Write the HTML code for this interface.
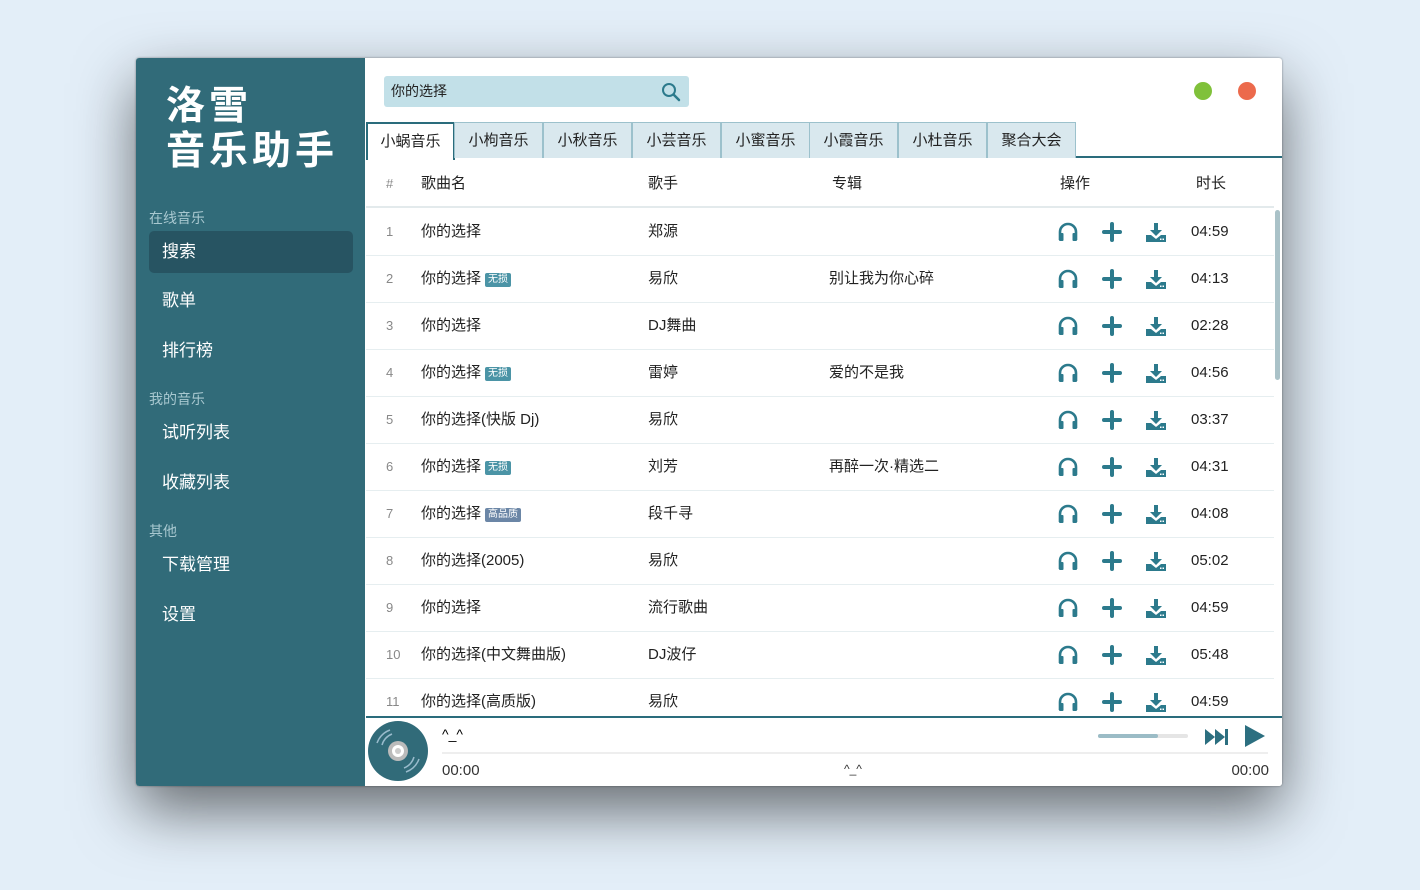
<!DOCTYPE html>
<html><head><meta charset="utf-8"><style>
*{box-sizing:border-box;margin:0;padding:0}
body{width:1420px;height:890px;background:#e3eef8;font-family:"Liberation Sans","Noto Sans CJK SC",sans-serif;position:relative;overflow:hidden}
.win{position:absolute;left:136px;top:58px;width:1146px;height:728px;background:#fff;box-shadow:0 25px 60px rgba(0,0,0,.55),0 0 2px rgba(0,0,0,.4);border-radius:3px;overflow:hidden}
.side{position:absolute;left:0;top:0;width:229px;height:728px;background:#316b79;color:#fff}
.logo{position:absolute;left:30px;top:26px;font-size:39px;line-height:45px;letter-spacing:4px;font-weight:bold}
.sec{position:absolute;left:13px;font-size:14px;color:#a8c8d0}
.item{position:absolute;left:13px;width:204px;height:42px;line-height:42px;padding-left:13px;font-size:17px;border-radius:5px}
.item.act{background:#275462}
.search{position:absolute;left:248px;top:18px;width:305px;height:31px;background:#c2e0e8;border-radius:3px;font-size:14px;line-height:31px;padding-left:7px;color:#222}
.dot{position:absolute;top:24px;width:18px;height:18px;border-radius:50%}
.tabs{position:absolute;left:230px;top:64px;height:36px;width:916px;border-bottom:2px solid #2a6c7c}
.tab{position:absolute;top:0;width:89px;height:36px;background:#d9e8ee;border:1px solid #9cc1cc;border-bottom:none;text-align:center;line-height:36px;font-size:15px;color:#222}
.tab.act{background:#fff;border:2px solid #2a6c7c;border-bottom:none;height:38px}
.row{position:absolute;left:230px;width:908px;height:47px;border-bottom:1px solid #e6eef0;font-size:15px;color:#222}
.row span{position:absolute;top:0;line-height:46px}
.n{left:20px;color:#888;font-size:13px}
.tag{display:inline-block;font-size:10px;color:#fff;background:#4b94a6;padding:0 3px;line-height:14px;border-radius:2px;margin-left:4px;vertical-align:1px}
.tag.hq{background:#6b86a6}
.ic{position:absolute;top:13px}
.player{position:absolute;left:230px;top:658px;width:916px;height:70px;border-top:2px solid #2a6c7c;background:#fff}
</style></head><body>
<div class="win">
<div class="side">
<div class="logo">洛雪<br>音乐助手</div>
<div class="sec" style="top:150px">在线音乐</div>
<div class="item act" style="top:173px">搜索</div>
<div class="item" style="top:222px">歌单</div>
<div class="item" style="top:272px">排行榜</div>
<div class="sec" style="top:331px">我的音乐</div>
<div class="item" style="top:354px">试听列表</div>
<div class="item" style="top:404px">收藏列表</div>
<div class="sec" style="top:463px">其他</div>
<div class="item" style="top:486px">下载管理</div>
<div class="item" style="top:536px">设置</div>
</div>
<div class="search">你的选择
<svg style="position:absolute;right:8px;top:6px" width="20" height="20" viewBox="0 0 20 20"><circle cx="8" cy="8" r="6" fill="none" stroke="#2c7a8c" stroke-width="2"/><path d="M12.5 12.5L18 18" stroke="#2c7a8c" stroke-width="2.5" stroke-linecap="round"/></svg></div>
<div class="dot" style="left:1058px;background:#80c13a"></div>
<div class="dot" style="left:1102px;background:#ec6a4c"></div>
<div class="tabs">
<div class="tab act" style="left:0">小蜗音乐</div>
<div class="tab" style="left:88px">小枸音乐</div>
<div class="tab" style="left:177px">小秋音乐</div>
<div class="tab" style="left:266px">小芸音乐</div>
<div class="tab" style="left:355px">小蜜音乐</div>
<div class="tab" style="left:443px">小霞音乐</div>
<div class="tab" style="left:532px">小杜音乐</div>
<div class="tab" style="left:621px">聚合大会</div>
</div>
<div class="row" style="top:102px;height:48px;border-bottom:2px solid #e3eaec">
<span class="n" style="line-height:48px">#</span><span style="left:55px;line-height:48px">歌曲名</span><span style="left:282px;line-height:48px">歌手</span><span style="left:466px;line-height:48px">专辑</span><span style="left:694px;line-height:48px">操作</span><span style="left:830px;line-height:48px">时长</span>
</div>
<div style="position:absolute;left:1139px;top:152px;width:5px;height:170px;background:#aac2c8;border-radius:3px"></div>
<div id="rows"></div>
<div class="player">
<svg style="position:absolute;left:2px;top:3px" width="60" height="60" viewBox="0 0 60 60"><circle cx="30" cy="30" r="30" fill="#316b79"/><circle cx="30" cy="30" r="10" fill="#bbb"/><circle cx="30" cy="30" r="6" fill="#fff"/><circle cx="30" cy="30" r="3" fill="#ccc"/><path d="M14 24a17 17 0 0 1 10-11M9 22a22 22 0 0 1 13-13M46 36a17 17 0 0 1-10 11M51 38a22 22 0 0 1-13 13" stroke="#9bc" stroke-width="1.5" fill="none"/></svg>
<div style="position:absolute;left:76px;top:8px;font-size:14px">^_^</div>
<div style="position:absolute;left:732px;top:16px;width:90px;height:4px;background:#e5e5e5;border-radius:2px"><div style="width:60px;height:4px;background:#9bbcc6;border-radius:2px"></div></div>
<svg style="position:absolute;left:838px;top:9px" width="26" height="20" viewBox="0 0 26 20"><path d="M1 2l10 8-10 8zM11 2l10 8-10 8z" fill="#2c6f80"/><rect x="21" y="2" width="3" height="16" fill="#2c6f80"/></svg>
<svg style="position:absolute;left:878px;top:6px" width="22" height="24" viewBox="0 0 22 24"><path d="M1 1l20 11-20 11z" fill="#2c6f80"/></svg>
<div style="position:absolute;left:76px;top:34px;width:826px;height:2px;background:#eee"></div>
<div style="position:absolute;left:76px;top:44px;font-size:15px;color:#333">00:00</div>
<div style="position:absolute;left:478px;top:44px;font-size:12px;color:#333">^_^</div>
<div style="position:absolute;right:13px;top:44px;font-size:15px;color:#333">00:00</div>
</div>
</div>
<script>
var d=[["你的选择","","郑源","","04:59"],["你的选择","无损","易欣","别让我为你心碎","04:13"],["你的选择","","DJ舞曲","","02:28"],["你的选择","无损","雷婷","爱的不是我","04:56"],["你的选择(快版 Dj)","","易欣","","03:37"],["你的选择","无损","刘芳","再醉一次·精选二","04:31"],["你的选择","高品质","段千寻","","04:08"],["你的选择(2005)","","易欣","","05:02"],["你的选择","","流行歌曲","","04:59"],["你的选择(中文舞曲版)","","DJ波仔","","05:48"],["你的选择(高质版)","","易欣","","04:59"]];
var c="#2c7a8c",h="";
var hp='<svg class="ic" style="left:691px;top:12px" width="22" height="22" viewBox="0 0 22 22"><path d="M3 19v-8a8 8 0 0 1 16 0v8" fill="none" stroke="'+c+'" stroke-width="2.6"/><rect x="2" y="12" width="4.5" height="8" rx="1" fill="'+c+'"/><rect x="15.5" y="12" width="4.5" height="8" rx="1" fill="'+c+'"/></svg>';
var pl='<svg class="ic" style="left:736px" width="20" height="20" viewBox="0 0 20 20"><path d="M10 2v16M2 10h16" stroke="'+c+'" stroke-width="4" stroke-linecap="round"/></svg>';
var dl='<svg class="ic" style="left:780px" width="20" height="20" viewBox="0 0 20 20"><path d="M8 1h4v7h4l-6 6-6-6h4z" fill="'+c+'"/><path d="M0 13h5l5 4 5-4h5v7H0z" fill="'+c+'"/><rect x="14" y="16.5" width="1.5" height="1.5" fill="#fff"/><rect x="16.5" y="16.5" width="1.5" height="1.5" fill="#fff"/></svg>';
d.forEach(function(r,i){var t=r[1]?'<i class="tag'+(r[1]=="高品质"?" hq":"")+'" style="font-style:normal">'+r[1]+'</i>':'';
h+='<div class="row" style="top:'+(151+47*i)+'px"><span class="n">'+(i+1)+'</span><span style="left:55px">'+r[0]+t+'</span><span style="left:282px">'+r[2]+'</span><span style="left:463px">'+r[3]+'</span>'+hp+pl+dl+'<span style="left:825px">'+r[4]+'</span></div>';});
document.getElementById("rows").outerHTML=h;
</script>
</body></html>
